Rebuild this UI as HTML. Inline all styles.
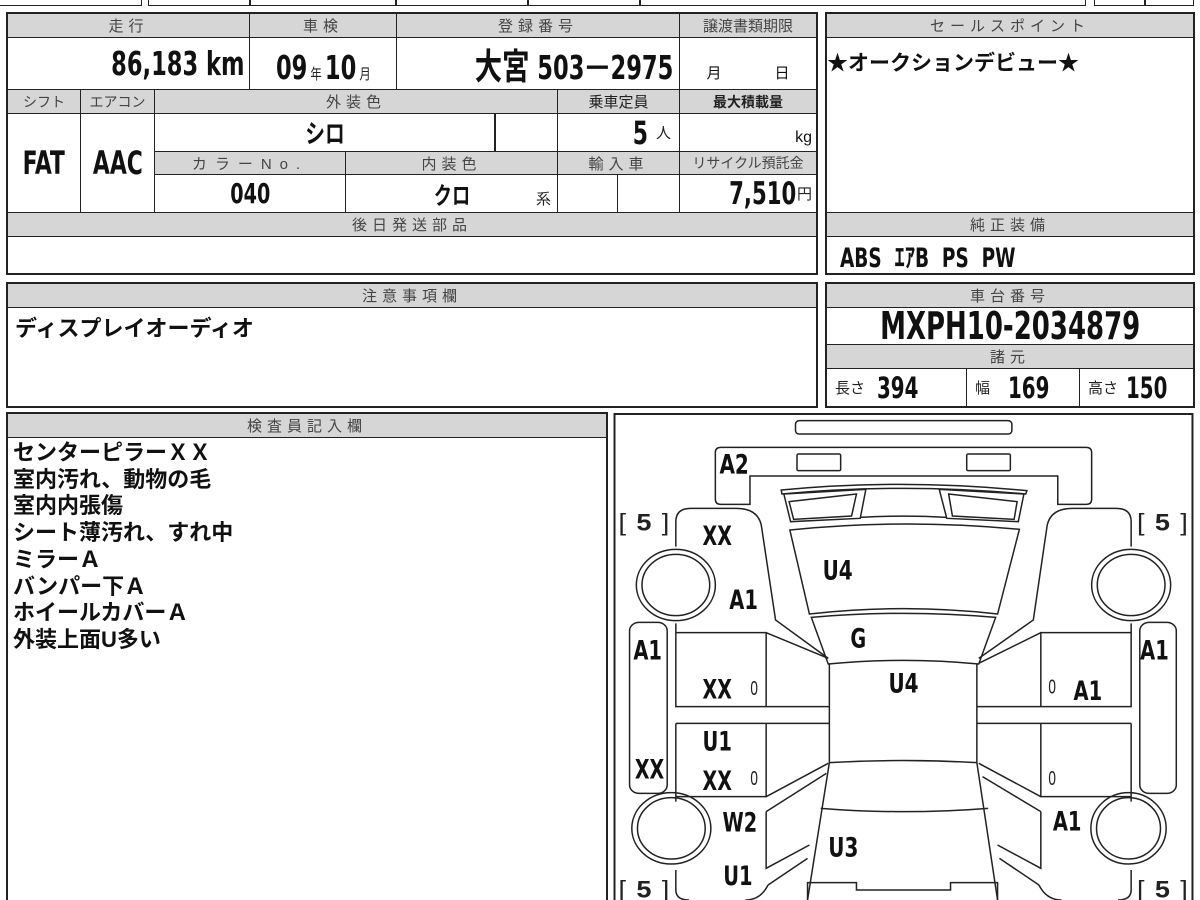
<!DOCTYPE html>
<html style="width:1200px;height:900px;overflow:hidden"><head><meta charset="utf-8"><style>
*{margin:0;padding:0;box-sizing:border-box}
body{width:1200px;height:900px;overflow:hidden;background:#fff;position:relative;font-family:"Liberation Sans","Noto Sans CJK JP",sans-serif;color:#111}
.c{position:absolute;border:1.5px solid #222;display:flex;align-items:center;justify-content:center;overflow:hidden;white-space:nowrap}
.h{background:#d6d6d6;color:#444;font-size:15px;letter-spacing:5px}
.b{font-family:"DejaVu Sans Condensed","Liberation Sans Narrow","DejaVu Sans","Noto Sans CJK JP",sans-serif;font-weight:bold;color:#111}
.n{display:inline-block;transform:scaleX(.76)}
.r{transform-origin:right center}
.l{transform-origin:left center}
.o{position:absolute;border:2px solid #222}
.s{font-size:12px;font-weight:normal;color:#222}
</style></head><body>
<div class="c" style="left:-2px;top:-10px;width:144px;height:16px"></div>
<div class="c" style="left:148px;top:-10px;width:103px;height:16px"></div>
<div class="c" style="left:249px;top:-10px;width:148px;height:16px"></div>
<div class="c" style="left:395px;top:-10px;width:134px;height:16px"></div>
<div class="c" style="left:527px;top:-10px;width:114px;height:16px"></div>
<div class="c" style="left:639px;top:-10px;width:447px;height:16px"></div>
<div class="c" style="left:1094px;top:-10px;width:52px;height:16px"></div>
<div class="c" style="left:1144px;top:-10px;width:50px;height:16px"></div>

<div class="c h" style="left:7px;top:13px;width:243px;height:25px">走行</div>
<div class="c h" style="left:249px;top:13px;width:148px;height:25px">車検</div>
<div class="c h" style="left:396px;top:13px;width:284px;height:25px">登録番号</div>
<div class="c h" style="left:679px;top:13px;width:138px;height:25px;letter-spacing:0">譲渡書類期限</div>
<div class="c b" style="left:7px;top:37px;width:243px;height:53px;justify-content:flex-end;padding-right:4px;font-size:33px"><span class="n r">86,183 km</span></div>
<div class="c b" style="left:249px;top:37px;width:148px;height:53px;font-size:33px;align-items:flex-end;padding-bottom:2px"><span class="n">09<span class="s" style="margin:0 4px;font-size:15px">年</span>10<span class="s" style="margin-left:4px;font-size:15px">月</span></span></div>
<div class="c b" style="left:396px;top:37px;width:284px;height:53px;justify-content:flex-end;padding-right:6px;font-size:33px"><span class="n r"><span style="font-family:'Noto Sans CJK JP';font-size:36px">大宮</span>&nbsp;503<span style="margin:0 2px">ᅳ</span>2975</span></div>
<div class="c" style="left:679px;top:37px;width:138px;height:53px;align-items:flex-end;padding-bottom:6px;font-size:15px;justify-content:space-around">月<span>日</span></div>
<div class="c h" style="left:7px;top:89px;width:74px;height:25px;letter-spacing:0;font-size:14px">シフト</div>
<div class="c h" style="left:80px;top:89px;width:75px;height:25px;letter-spacing:0;font-size:14px">エアコン</div>
<div class="c h" style="left:154px;top:89px;width:404px;height:25px">外装色</div>
<div class="c h" style="left:557px;top:89px;width:123px;height:25px;letter-spacing:0;color:#222">乗車定員</div>
<div class="c h" style="left:679px;top:89px;width:138px;height:25px;letter-spacing:0;color:#222;font-weight:bold;font-size:14px">最大積載量</div>
<div class="c b" style="left:7px;top:113px;width:74px;height:100px;font-size:32px"><span class="n">FAT</span></div>
<div class="c b" style="left:80px;top:113px;width:75px;height:100px;font-size:32px"><span class="n">AAC</span></div>
<div class="c b" style="left:154px;top:113px;width:342px;height:39px;font-size:26px"><span class="n">シロ</span></div>
<div class="c" style="left:494px;top:113px;width:64px;height:39px"></div>
<div class="c b" style="left:557px;top:113px;width:123px;height:39px;font-size:32px;justify-content:flex-end;padding-right:8px"><span class="n r">5</span><span class="s" style="margin-left:8px;font-size:15px">人</span></div>
<div class="c" style="left:679px;top:113px;width:138px;height:39px;justify-content:flex-end;align-items:flex-end;padding:0 4px 4px 0;font-size:16px">kg</div>
<div class="c h" style="left:154px;top:151px;width:192px;height:24px;font-size:15px;letter-spacing:8px">カラーNo.</div>
<div class="c h" style="left:345px;top:151px;width:213px;height:24px">内装色</div>
<div class="c h" style="left:557px;top:151px;width:123px;height:24px">輸入車</div>
<div class="c h" style="left:679px;top:151px;width:138px;height:24px;letter-spacing:0;font-size:14px">リサイクル預託金</div>
<div class="c b" style="left:154px;top:174px;width:192px;height:39px;font-size:28px"><span class="n">040</span></div>
<div class="c b" style="left:345px;top:174px;width:213px;height:39px;font-size:24px"><span class="n">クロ</span><span class="s" style="position:absolute;right:6px;bottom:3px;font-size:15px">系</span></div>
<div class="c" style="left:557px;top:174px;width:61px;height:39px"></div>
<div class="c" style="left:617px;top:174px;width:63px;height:39px"></div>
<div class="c b" style="left:679px;top:174px;width:138px;height:39px;font-size:31px;justify-content:flex-end;padding-right:4px"><span class="n r">7,510</span><span class="s" style="margin-left:1px;font-size:15px">円</span></div>
<div class="c h" style="left:7px;top:212px;width:810px;height:25px">後日発送部品</div>
<div class="c" style="left:7px;top:236px;width:810px;height:38px"></div>
<div class="o" style="left:6px;top:12px;width:812px;height:263px"></div>

<div class="c h" style="left:826px;top:13px;width:368px;height:25px">セールスポイント</div>
<div class="c" style="left:826px;top:37px;width:368px;height:176px;align-items:flex-start;justify-content:flex-start;font-weight:bold;font-size:21px;padding-top:9px">★オークションデビュー★</div>
<div class="c h" style="left:826px;top:212px;width:368px;height:25px">純正装備</div>
<div class="c b" style="left:826px;top:236px;width:368px;height:38px;justify-content:flex-start;padding-left:13px;font-size:27px"><span class="n l">ABS&nbsp; ｴｱB&nbsp; PS&nbsp; PW</span></div>
<div class="o" style="left:825px;top:12px;width:370px;height:263px"></div>

<div class="c h" style="left:7px;top:283px;width:810px;height:25px">注意事項欄</div>
<div class="c" style="left:7px;top:307px;width:810px;height:100px;align-items:flex-start;justify-content:flex-start;font-weight:bold;font-size:22px;padding:3px 0 0 7px">ディスプレイオーディオ</div>
<div class="o" style="left:6px;top:282px;width:812px;height:126px"></div>
<div class="c h" style="left:826px;top:283px;width:368px;height:25px">車台番号</div>
<div class="c b" style="left:826px;top:307px;width:368px;height:38px;font-size:38px"><span class="n">MXPH10-2034879</span></div>
<div class="c h" style="left:826px;top:344px;width:368px;height:25px">諸元</div>
<div class="c b" style="left:826px;top:368px;width:141px;height:39px;font-size:29px;justify-content:flex-start;padding-left:8px"><span class="s" style="font-size:15px;margin-right:12px">長さ</span><span class="n l">394</span></div>
<div class="c b" style="left:966px;top:368px;width:114px;height:39px;font-size:29px;justify-content:flex-start;padding-left:8px"><span class="s" style="font-size:15px;margin-right:18px">幅</span><span class="n l">169</span></div>
<div class="c b" style="left:1079px;top:368px;width:115px;height:39px;font-size:29px;justify-content:flex-start;padding-left:8px"><span class="s" style="font-size:15px;margin-right:8px">高さ</span><span class="n l">150</span></div>
<div class="o" style="left:825px;top:282px;width:370px;height:126px"></div>

<div class="c h" style="left:7px;top:413px;width:600px;height:25px">検査員記入欄</div>
<div class="c" style="left:7px;top:437px;width:600px;height:463px;border-bottom:none;align-items:flex-start;justify-content:flex-start;padding:2px 0 0 5px">
<div style="font-weight:bold;font-size:22px;line-height:26.7px">センターピラーＸＸ<br>室内汚れ、動物の毛<br>室内内張傷<br>シート薄汚れ、すれ中<br>ミラーＡ<br>バンパー下Ａ<br>ホイールカバーＡ<br>外装上面U多い</div></div>
<div class="o" style="left:6px;top:412px;width:602px;height:488px;border-bottom:none"></div>

<svg style="position:absolute;left:610px;top:410px" width="590" height="490" viewBox="0 0 1568 1470" preserveAspectRatio="none">
<g fill="none" stroke="#222" stroke-width="1.5">
<rect x="12" y="12" width="1536" height="1600" vector-effect="non-scaling-stroke" stroke-width="2"/>
<rect x="493" y="32" width="575" height="40" rx="10" vector-effect="non-scaling-stroke"/>
<path vector-effect="non-scaling-stroke" d="M295 112 H1265 Q1280 112 1280 127 V268 Q1280 283 1265 283 H1190 V198 H372 V283 H295 Q280 283 280 268 V127 Q280 112 295 112 Z"/>
<rect x="497" y="132" width="116" height="50" rx="4" vector-effect="non-scaling-stroke"/>
<rect x="948" y="132" width="116" height="50" rx="4" vector-effect="non-scaling-stroke"/>
<path vector-effect="non-scaling-stroke" d="M455 240 Q780 205 1108 242 L1105 252 Q780 218 457 252 Z"/>
<path vector-effect="non-scaling-stroke" d="M462 252 L680 238 L665 325 L480 335 Z M476 275 L655 252 L642 318 L488 328 Z"/>
<path vector-effect="non-scaling-stroke" d="M875 238 L1100 252 L1085 335 L895 325 Z M900 252 L1082 275 L1074 328 L910 318 Z"/>
<path vector-effect="non-scaling-stroke" d="M665 322 Q780 315 895 322"/>
<path vector-effect="non-scaling-stroke" d="M478 360 Q780 325 1088 358 L1030 612 Q780 580 530 612 Z"/>
<path vector-effect="non-scaling-stroke" d="M535 622 Q780 598 1025 622 L980 762 Q780 740 580 762 Z"/>
<path vector-effect="non-scaling-stroke" d="M583 762 V1058 Q780 1045 975 1058 V762"/>
<path vector-effect="non-scaling-stroke" d="M583 1058 L525 1470 M975 1058 L1030 1470 M560 1195 Q780 1215 1005 1195"/>
<path vector-effect="non-scaling-stroke" d="M525 1470 V1418 H655 V1440 H905 V1418 H1030 V1470"/>
<path vector-effect="non-scaling-stroke" d="M175 410 V335 Q175 295 215 295 H335 Q392 295 402 345 L440 630 L580 745"/>
<path vector-effect="non-scaling-stroke" d="M175 640 V668 H415 V890 H175 Z M415 668 L580 745 M175 890 H583 M175 940 H583 M175 940 V1160 H415 V940 M415 1160 L580 1060 M175 1160 V1175"/>
<path vector-effect="non-scaling-stroke" d="M415 1205 L575 1090 M415 1205 V1375 L530 1305 M420 1425 L525 1345 M175 1380 V1440 Q175 1470 210 1470 M420 1425 Q400 1470 360 1470"/>
<rect x="52" y="637" width="100" height="513" rx="25" vector-effect="non-scaling-stroke"/>
<ellipse cx="175" cy="525" rx="105" ry="107" vector-effect="non-scaling-stroke"/>
<ellipse cx="175" cy="525" rx="90" ry="92" vector-effect="non-scaling-stroke"/>
<ellipse cx="163" cy="1255" rx="105" ry="107" vector-effect="non-scaling-stroke"/>
<ellipse cx="163" cy="1255" rx="90" ry="92" vector-effect="non-scaling-stroke"/>
<path vector-effect="non-scaling-stroke" d="M1385 410 V335 Q1385 295 1345 295 H1230 Q1172 295 1162 345 L1125 630 L980 745"/>
<path vector-effect="non-scaling-stroke" d="M1385 640 V668 H1145 V890 H1385 Z M1145 668 L980 760 M1385 890 H975 M1385 940 H975 M1385 940 V1160 H1145 V940 M1145 1160 L980 1060 M1385 1160 V1175"/>
<path vector-effect="non-scaling-stroke" d="M1145 1205 L990 1100 M1145 1205 V1375 L1030 1305 M1140 1425 L1035 1345 M1385 1380 V1440 Q1385 1470 1350 1470 M1140 1425 Q1160 1470 1200 1470"/>
<rect x="1408" y="637" width="97" height="513" rx="25" vector-effect="non-scaling-stroke"/>
<ellipse cx="1385" cy="525" rx="105" ry="107" vector-effect="non-scaling-stroke"/>
<ellipse cx="1385" cy="525" rx="90" ry="92" vector-effect="non-scaling-stroke"/>
<ellipse cx="1378" cy="1255" rx="100" ry="107" vector-effect="non-scaling-stroke"/>
<ellipse cx="1378" cy="1255" rx="85" ry="92" vector-effect="non-scaling-stroke"/>
</g>
<g font-family="DejaVu Sans Condensed, DejaVu Sans, sans-serif" font-weight="bold" font-size="80" fill="#111" text-anchor="middle">
<text x="330" y="190" textLength="78" lengthAdjust="spacingAndGlyphs">A2</text>
<text x="285" y="405" textLength="78" lengthAdjust="spacingAndGlyphs">XX</text>
<text x="355" y="597" textLength="76" lengthAdjust="spacingAndGlyphs">A1</text>
<text x="605" y="508" textLength="80" lengthAdjust="spacingAndGlyphs">U4</text>
<text x="100" y="748" textLength="76" lengthAdjust="spacingAndGlyphs">A1</text>
<text x="660" y="712" textLength="42" lengthAdjust="spacingAndGlyphs">G</text>
<text x="780" y="848" textLength="80" lengthAdjust="spacingAndGlyphs">U4</text>
<text x="285" y="865" textLength="78" lengthAdjust="spacingAndGlyphs">XX</text>
<text x="1270" y="870" textLength="76" lengthAdjust="spacingAndGlyphs">A1</text>
<text x="1447" y="748" textLength="76" lengthAdjust="spacingAndGlyphs">A1</text>
<text x="285" y="1022" textLength="78" lengthAdjust="spacingAndGlyphs">U1</text>
<text x="105" y="1105" textLength="78" lengthAdjust="spacingAndGlyphs">XX</text>
<text x="285" y="1140" textLength="78" lengthAdjust="spacingAndGlyphs">XX</text>
<text x="345" y="1265" textLength="92" lengthAdjust="spacingAndGlyphs">W2</text>
<text x="1215" y="1262" textLength="76" lengthAdjust="spacingAndGlyphs">A1</text>
<text x="620" y="1340" textLength="80" lengthAdjust="spacingAndGlyphs">U3</text>
<text x="340" y="1425" textLength="78" lengthAdjust="spacingAndGlyphs">U1</text>
</g>
<g font-family="Liberation Sans, sans-serif" font-size="60" fill="#222" text-anchor="middle">
<text x="383" y="855" textLength="20" lengthAdjust="spacingAndGlyphs">0</text><text x="1175" y="850" textLength="20" lengthAdjust="spacingAndGlyphs">0</text>
<text x="383" y="1125" textLength="20" lengthAdjust="spacingAndGlyphs">0</text><text x="1175" y="1125" textLength="20" lengthAdjust="spacingAndGlyphs">0</text>
<text x="90" y="362" font-size="72" textLength="135" lengthAdjust="spacing">[ <tspan font-weight="bold">5</tspan> ]</text>
<text x="1468" y="362" font-size="72" textLength="135" lengthAdjust="spacing">[ <tspan font-weight="bold">5</tspan> ]</text>
<text x="90" y="1462" font-size="72" textLength="135" lengthAdjust="spacing">[ <tspan font-weight="bold">5</tspan> ]</text>
<text x="1468" y="1462" font-size="72" textLength="135" lengthAdjust="spacing">[ <tspan font-weight="bold">5</tspan> ]</text>
</g>
</svg>
</body></html>
